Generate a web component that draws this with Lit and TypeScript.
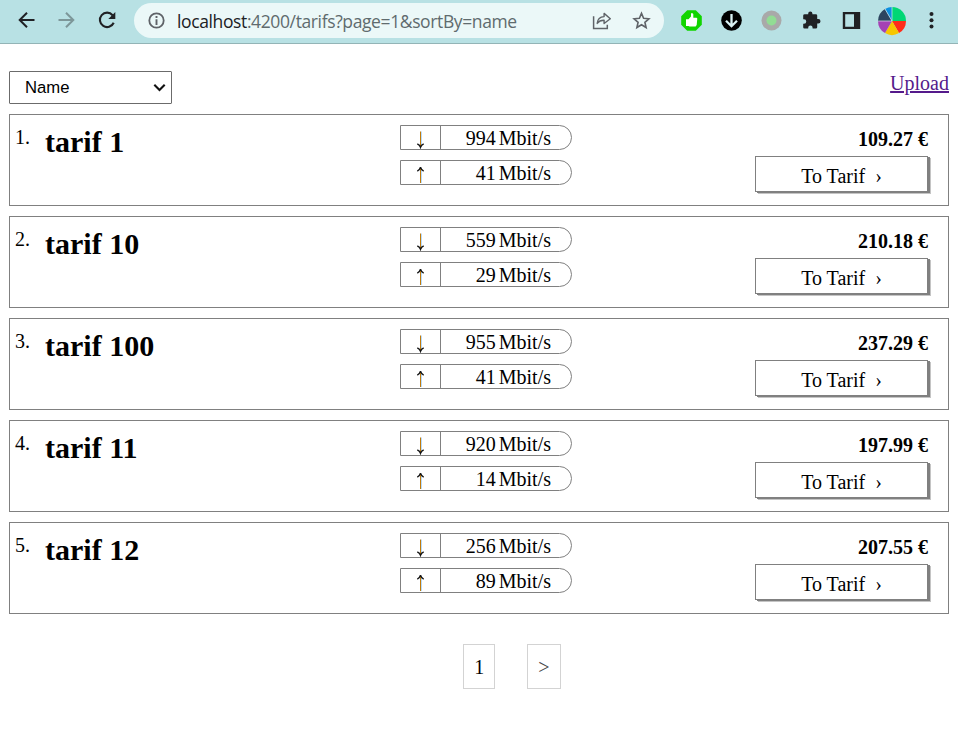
import { LitElement, html, css, svg } from "lit";
import { customElement, property } from "lit/decorators.js";

interface Tarif {
  name: string;
  down: number;
  up: number;
  price: string;
}

const TARIFS: Tarif[] = [
  { name: "tarif 1", down: 994, up: 41, price: "109.27" },
  { name: "tarif 10", down: 559, up: 29, price: "210.18" },
  { name: "tarif 100", down: 955, up: 41, price: "237.29" },
  { name: "tarif 11", down: 920, up: 14, price: "197.99" },
  { name: "tarif 12", down: 256, up: 89, price: "207.55" },
];

const SLICES: [number, number, string][] = [
  [0, 90, "#00d775"],
  [90, 150, "#ff2d1a"],
  [150, 210, "#f7c600"],
  [210, 270, "#a541b5"],
  [270, 330, "#2d4560"],
  [330, 360, "#0c8fe0"],
];

const slicePath = (from: number, to: number, r: number) => {
  const pt = (deg: number) => {
    const a = (deg * Math.PI) / 180;
    return `${(r * Math.sin(a)).toFixed(2)} ${(-r * Math.cos(a)).toFixed(2)}`;
  };
  return `M0 0L${pt(from)}A${r} ${r} 0 0 1 ${pt(to)}Z`;
};

@customElement("browser-bar")
export class BrowserBar extends LitElement {
  static styles = css`
    :host {
      display: flex;
      align-items: flex-start;
      box-sizing: border-box;
      height: 44px;
      background: #b8e1e4;
      border-bottom: 1px solid #93b4b6;
    }
    svg {
      display: block;
      flex: none;
    }
    .nav {
      width: 134px;
      height: 43px;
    }
    .address {
      display: flex;
      box-sizing: border-box;
      width: 530px;
      height: 35px;
      margin-top: 3px;
      border-radius: 18px;
      background: #ebf8f8;
    }
    .info {
      width: 43px;
      height: 35px;
    }
    .url {
      flex: 1;
      font: 17.5px/36px "Open Sans", "Noto Sans", sans-serif;
      letter-spacing: -0.38px;
      white-space: nowrap;
      color: #5f6b6e;
    }
    .host {
      color: #202124;
    }
    .actions {
      width: 80px;
      height: 35px;
    }
    .tools {
      width: 294px;
      height: 43px;
    }
  `;

  render() {
    return html`
      <svg class="nav" viewBox="0 0 134 43" fill="none" stroke-width="2">
        <path d="M34.5 20H20M27 12.7L19.7 20L27 27.3" stroke="#202124" />
        <path d="M58.5 20H73M66 12.7L73.3 20L66 27.3" stroke="#7d9799" />
        <path d="M112.6 15.2A7.2 7.2 0 1 0 113.7 22.8" stroke="#202124" stroke-width="2.1" />
        <path d="M115.3 12V19H108.3Z" fill="#202124" />
      </svg>
      <div class="address">
        <svg class="info" viewBox="0 0 43 35" fill="none">
          <circle cx="22.5" cy="17.5" r="7.2" stroke="#5f6368" stroke-width="1.8" />
          <path d="M22.5 16.3V22M22.5 13V15" stroke="#5f6368" stroke-width="1.9" />
        </svg>
        <div class="url"><span class="host">localhost</span>:4200/tarifs?page=1&amp;sortBy=name</div>
        <svg class="actions" viewBox="584 3 80 35" fill="none" stroke="#5f6368">
          <path d="M593.6 16.2V28.5H607.3V24.8" stroke-width="1.5" />
          <path d="M597.2 23.4C597.6 18.8 600 16.8 604.1 16.6V13.4L610.3 18.7L604.1 23.5V20.3C601 20.2 599 21 597.2 23.4Z" stroke-width="1.4" stroke-linejoin="round" />
          <path d="M641.5 13.4L643.6 18.3L648.9 18.8L644.9 22.3L646.1 27.5L641.5 24.7L636.9 27.5L638.1 22.3L634.1 18.8L639.4 18.3Z" stroke-width="1.6" />
        </svg>
      </div>
      <svg class="tools" viewBox="664 0 294 43">
        <path d="M687.2 10.2H695.8L701.8 16.2V24.8L695.8 30.8H687.2L681.2 24.8V16.2Z" fill="#11d500" />
        <path d="M686 19.3H688.5L691 16.6V13.3H692.6L693.3 14V17.8H696.6L697.3 18.6L696.7 25L695.6 26.6H689.5L688.5 26H686Z" fill="#fff" />
        <circle cx="731.5" cy="20.5" r="10.3" fill="#000" />
        <path d="M731.5 14V26M726 20.8L731.5 26.2L737 20.8" fill="none" stroke="#d9f1f3" stroke-width="2.3" />
        <circle cx="771.5" cy="20.5" r="10" fill="#a9a9a9" />
        <circle cx="771.5" cy="20.5" r="5" fill="#92dc94" />
        <path d="M804.8 14.2H808.2V13.6A2.1 2.1 0 0 1 812.4 13.6V14.2H815.8Q817.2 14.2 817.2 15.6V19H818.3A2.2 2.2 0 0 1 818.3 23.4H817.2V27.2Q817.2 28.6 815.8 28.6H812.6V27.7A2.2 2.2 0 0 0 808.2 27.7V28.6H804.6Q803.2 28.6 803.2 27.2V23.8H804A2.2 2.2 0 0 0 804 19.3H803.2V15.6Q803.2 14.2 804.8 14.2Z" fill="#202124" />
        <path d="M842.8 12H860.2V29H842.8ZM845.2 14.3V26.7H854V14.3Z" fill="#202124" fill-rule="evenodd" />
        <g transform="translate(892 21)">
          ${SLICES.map(([a, b, c]) => svg`<path d=${slicePath(a, b, 14)} fill=${c} />`)}
          <path d="M-7 -12.1L0 0V-14M-14 0H0" fill="none" stroke="#d5e9ee" stroke-width="0.7" />
        </g>
        <g fill="#202124">
          <circle cx="931.5" cy="14" r="2" />
          <circle cx="931.5" cy="20.2" r="2" />
          <circle cx="931.5" cy="26.5" r="2" />
        </g>
      </svg>
    `;
  }
}

@customElement("tarif-card")
export class TarifCard extends LitElement {
  @property({ type: Number }) index = 1;
  @property({ attribute: false }) tarif!: Tarif;

  static styles = css`
    :host {
      display: grid;
      grid-template-columns: 35px 355px 172px 1fr;
      box-sizing: border-box;
      height: 92px;
      padding: 10px 20px 0 0;
      border: 1px solid gray;
    }
    .index {
      padding-left: 5px;
      line-height: 24px;
    }
    .name {
      margin: 0;
      font-size: 30px;
      line-height: 33px;
    }
    .speeds {
      display: flex;
      flex-direction: column;
      gap: 10px;
    }
    .speed {
      display: flex;
      box-sizing: border-box;
      height: 25px;
      border: 1px solid gray;
      border-radius: 0 13px 13px 0;
      line-height: 24px;
    }
    .arrow {
      display: block;
      width: 39px;
      height: 23px;
      border-right: 1px solid gray;
    }
    .value {
      flex: 1;
      padding-right: 20px;
      text-align: right;
    }
    .unit {
      margin-left: 3px;
    }
    .offer {
      display: flex;
      flex-direction: column;
      align-items: flex-end;
    }
    .price {
      height: 31px;
      line-height: 29px;
    }
    .price b {
      white-space: nowrap;
    }
    .go {
      box-sizing: border-box;
      width: 173px;
      height: 36px;
      border: 1px solid gray;
      box-shadow: 2px 1px 0 gray, 3px 2px 0 #c4c4c4;
      background: #fff;
      line-height: 38px;
      text-align: center;
    }
    .chevron {
      margin-left: 10px;
    }
  `;

  private speed(up: boolean, value: number) {
    const head = up ? "M16.3 10.2Q18.8 9 19.5 6.2Q20.2 9 22.7 10.2" : "M16.3 17.8Q18.8 19 19.5 21.2Q20.2 19 22.7 17.8";
    const top = up ? 7 : 5.5;
    return html`<div class="speed">
      <svg class="arrow" viewBox="0 0 39 23">
        <rect x="19" y=${top} width="1" height="15" fill="#c07a0c" />
        <rect x="20" y=${top} width="1" height="15" fill="#b5dcff" />
        <path d=${head} fill="none" stroke="#151515" stroke-width="1.4" />
      </svg>
      <span class="value">${value}<span class="unit">Mbit/s</span></span>
    </div>`;
  }

  render() {
    const t = this.tarif;
    return html`
      <span class="index">${this.index}.</span>
      <h2 class="name">${t.name}</h2>
      <div class="speeds">${this.speed(false, t.down)}${this.speed(true, t.up)}</div>
      <div class="offer">
        <span class="price"><b>${t.price} €</b></span>
        <div class="go">To Tarif<span class="chevron">›</span></div>
      </div>
    `;
  }
}

@customElement("app-root")
export class AppRoot extends LitElement {
  static styles = css`
    :host {
      display: block;
      height: 732px;
      overflow: hidden;
      background: #fff;
      color: #000;
      font: 20px "Liberation Serif", "Times New Roman", serif;
    }
    main {
      padding: 27px 9px 0;
    }
    .top {
      display: flex;
      justify-content: space-between;
      height: 43px;
    }
    .sort {
      display: flex;
      align-items: center;
      justify-content: space-between;
      box-sizing: border-box;
      width: 163px;
      height: 33px;
      padding: 0 5px 0 15px;
      border: 1px solid #6b6b6b;
      border-radius: 1px;
      font: 16.7px "Liberation Sans", Arial, sans-serif;
    }
    .upload {
      color: #551a8b;
      line-height: 24px;
      text-decoration: underline;
    }
    .list {
      display: flex;
      flex-direction: column;
      gap: 10px;
    }
    .pages {
      display: flex;
      justify-content: center;
      gap: 32px;
      margin: 30px 0 0 66px;
    }
    .page {
      box-sizing: border-box;
      height: 45px;
      padding: 0 10px;
      border: 1px solid lightgray;
      line-height: 44px;
    }
    .next {
      color: #444;
    }
  `;

  render() {
    return html`
      <browser-bar></browser-bar>
      <main>
        <div class="top">
          <div class="sort">
            <span>Name</span>
            <svg width="13" height="9" viewBox="0 0 13 9">
              <path d="M1.3 1.8L6.5 7L11.7 1.8" fill="none" stroke="#111" stroke-width="2.1" />
            </svg>
          </div>
          <a class="upload">Upload</a>
        </div>
        <div class="list">
          ${TARIFS.map((t, i) => html`<tarif-card .index=${i + 1} .tarif=${t}></tarif-card>`)}
        </div>
        <div class="pages">
          <span class="page">1</span>
          <span class="page next">&gt;</span>
        </div>
      </main>
    `;
  }
}
